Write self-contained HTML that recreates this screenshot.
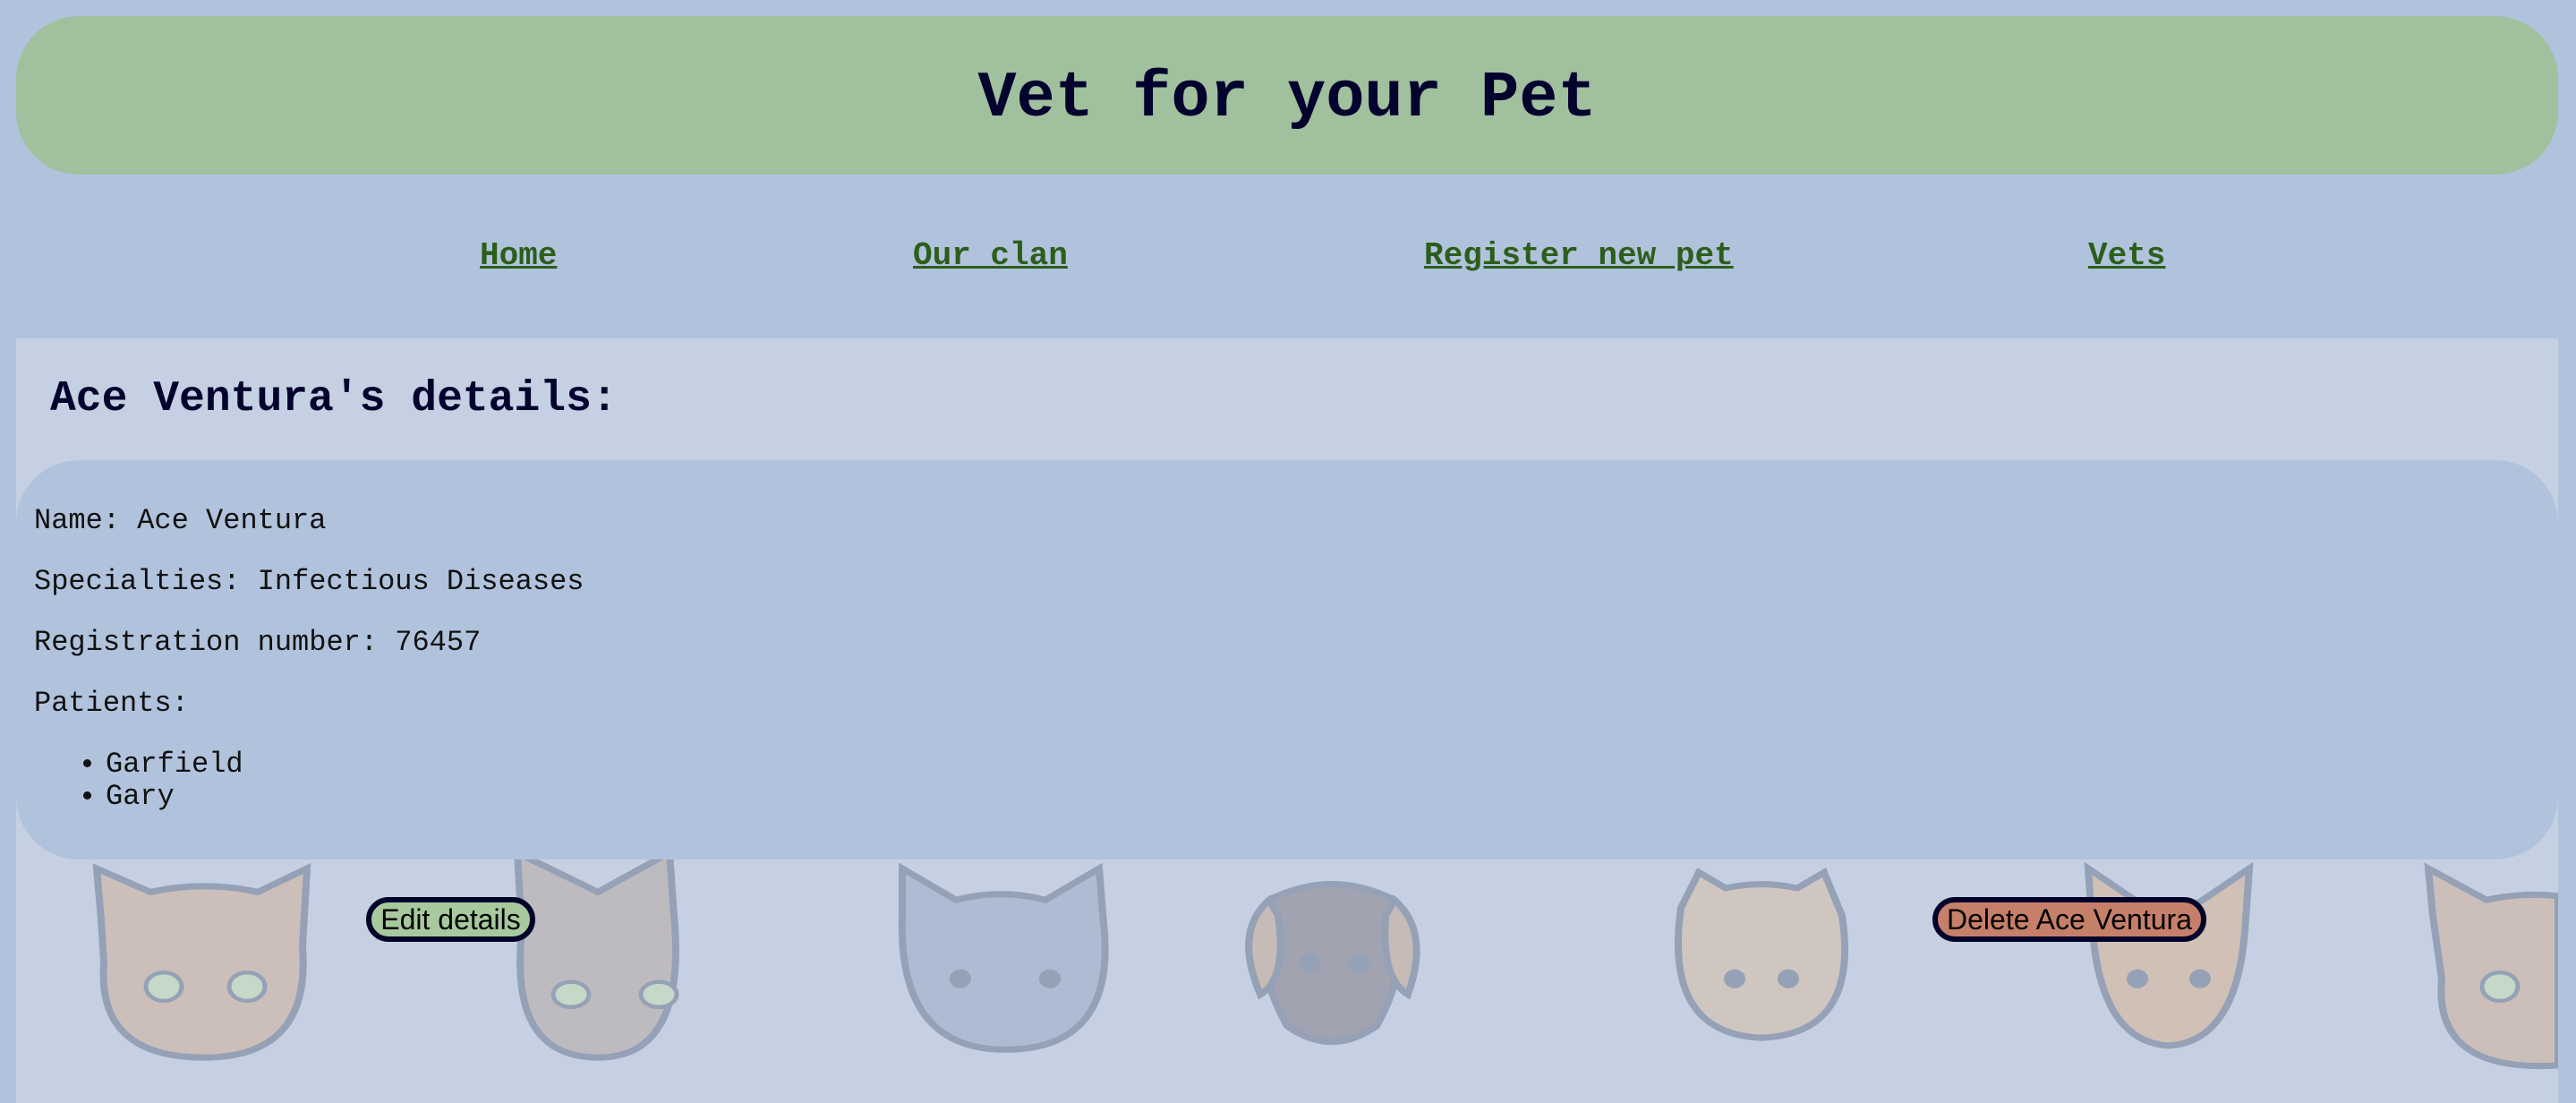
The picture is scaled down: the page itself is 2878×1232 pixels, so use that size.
<!DOCTYPE html>
<html><head><meta charset="utf-8"><style>
*{box-sizing:border-box}
html,body{margin:0;padding:0;width:2878px;height:1232px;overflow:hidden;background:#b1c3dc;font-family:"Liberation Mono",monospace;}
.header{position:absolute;left:18px;top:18px;width:2840px;height:177px;background:#a1c09e;border-radius:70px;}
.header h1{margin:0;position:absolute;left:0;right:0;top:52px;text-align:center;font-size:72px;line-height:80px;color:#03032e;font-weight:bold;}
.nav a{position:absolute;top:266px;font-size:36px;font-weight:bold;color:#2c5e1b;text-decoration:underline;line-height:40px;}
.main{position:absolute;left:18px;top:378px;width:2840px;height:854px;background:#c5d1e3;overflow:hidden;}
.main h2{position:absolute;left:38px;top:40px;margin:0;font-size:48px;line-height:56px;color:#03032e;}
.box{position:absolute;left:0;top:136px;width:2840px;height:446px;background:#b1c3dc;border-radius:70px;z-index:2;font-size:32px;color:#111;}
.box p{position:absolute;left:20px;margin:0;line-height:40px;}
.box ul{position:absolute;left:20px;margin:0;padding-left:80px;line-height:36px;font-size:32px;}
.pets{position:absolute;left:0;top:0;z-index:1;opacity:.38}
.btn{position:absolute;z-index:3;top:1002px;height:50px;border:6px solid #02022a;border-radius:25px;font-family:"Liberation Sans",Arial,sans-serif;font-size:32px;line-height:38px;color:#000;text-align:center;}
</style></head><body>
<div class="header"><h1>Vet for your Pet</h1></div>
<div class="nav">
<a style="left:536px">Home</a>
<a style="left:1020px">Our clan</a>
<a style="left:1591px">Register new pet</a>
<a style="left:2333px">Vets</a>
</div>
<div class="main">
<h2>Ace Ventura's details:</h2>
<svg class="pets" width="2840" height="854" viewBox="0 0 2840 854">
<g transform="translate(0,592) scale(1,0.88) translate(0,-560)">
<g stroke="#4a5570" stroke-width="8" fill="#d8a27a">
<path d="M95 625 L90 560 L150 590 Q210 575 270 590 L325 560 L320 660 Q330 800 210 800 Q90 800 98 680 Z"/>
<path d="M565 640 L560 540 L650 590 L730 540 L735 620 Q750 800 650 800 Q550 800 565 640 Z" fill="#b59a8a"/>
<path d="M990 620 L990 560 L1050 600 Q1100 585 1150 600 L1210 560 L1215 630 Q1230 790 1105 790 Q985 790 990 620 Z" fill="#8c98b8"/>
<path d="M1400 600 Q1470 560 1540 600 Q1560 680 1520 760 Q1470 800 1420 760 Q1380 680 1400 600 Z" fill="#6a5a60"/>
<path d="M1400 600 Q1360 640 1390 720 Q1420 700 1410 620Z M1540 600 Q1580 640 1555 720 Q1525 700 1530 620Z" fill="#c89a70"/>
<path d="M1860 610 L1880 565 L1910 585 Q1950 575 1990 585 L2020 565 L2040 620 Q2060 770 1950 775 Q1840 770 1860 610 Z" fill="#e2b58a"/>
<path d="M2320 640 L2315 560 L2380 610 L2430 610 L2495 560 L2490 640 Q2480 780 2405 785 Q2330 780 2320 640 Z" fill="#e2a770"/>
<path d="M2700 620 L2695 560 L2760 600 Q2800 590 2840 595 L2840 810 Q2700 820 2710 700 Z"/>
</g>
<g fill="#c9e59a" stroke="#4a5570" stroke-width="5">
<ellipse cx="165" cy="710" rx="20" ry="18"/><ellipse cx="258" cy="710" rx="20" ry="18"/>
<ellipse cx="620" cy="720" rx="20" ry="16"/><ellipse cx="718" cy="720" rx="20" ry="16"/>
<ellipse cx="2775" cy="710" rx="20" ry="18"/>
</g>
<g fill="#4a5570">
<circle cx="1055" cy="700" r="12"/><circle cx="1155" cy="700" r="12"/>
<circle cx="1445" cy="680" r="12"/><circle cx="1500" cy="680" r="12"/>
<circle cx="1920" cy="700" r="12"/><circle cx="1980" cy="700" r="12"/>
<circle cx="2370" cy="700" r="12"/><circle cx="2440" cy="700" r="12"/>
</g>
</g>
</svg>
<div class="box">
<p style="top:48px">Name: Ace Ventura</p>
<p style="top:116px">Specialties: Infectious Diseases</p>
<p style="top:184px">Registration number: 76457</p>
<p style="top:252px">Patients:</p>
<ul style="top:322px"><li>Garfield</li><li>Gary</li></ul>
</div>
</div>
<div class="btn" style="left:409px;width:189px;background:#a8c99e">Edit details</div>
<div class="btn" style="left:2159px;width:306px;background:#c6806a">Delete Ace Ventura</div>
</body></html>
